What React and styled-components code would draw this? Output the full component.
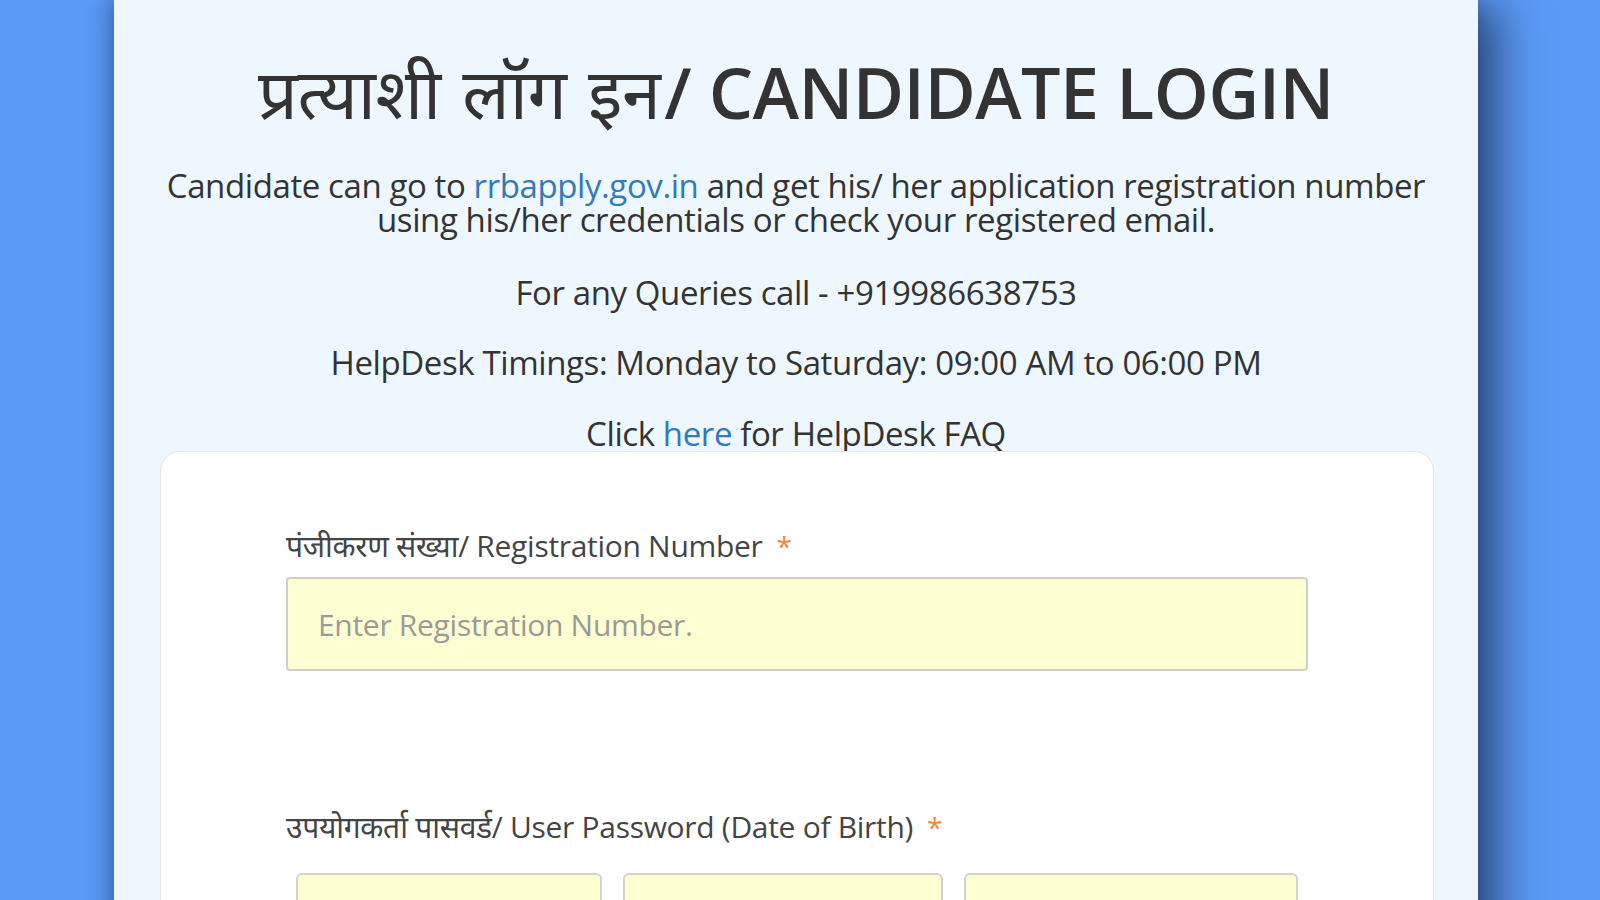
import styled, { createGlobalStyle } from "styled-components"

const GlobalStyle = createGlobalStyle`
    html, body {
        margin: 0;
        padding: 0;
        height: 100%;
        overflow: hidden;
    }
    body {
        background: #5b9af6;
        font-family: "Open Sans", "Noto Sans", sans-serif;
        color: #333;
    }
`

const Page = styled.div`
    height: 100vh;
    overflow: hidden;
    display: flex;
`

const Panel = styled.div`
    width: 1364px;
    margin-left: 114px;
    min-height: 1100px;
    background: #eef6fe;
    box-shadow: 28px 0 40px -6px rgba(20, 30, 60, 0.6), -6px 0 18px rgba(20, 30, 60, 0.35);
    padding-top: 53px;
    box-sizing: border-box;
    display: flex;
    flex-direction: column;
    align-items: center;
`

const Title = styled.h1`
    margin: 0;
    font-size: 70px;
    line-height: 78px;
    font-weight: 600;
    color: #333;
    letter-spacing: -0.5px;
`

const Hindi = styled.span`
    font-weight: 400;
    word-spacing: 4px;
    margin-right: 4px;
`

const Info = styled.p`
    margin: ${p => p.top}px 30px 0;
    font-size: 33px;
    line-height: 34px;
    text-align: center;
    color: #333;
    letter-spacing: -0.4px;
`

const Link = styled.a`
    color: #337ab7;
    text-decoration: none;
`

const Card = styled.div`
    align-self: stretch;
    margin: 0 44px 0 46px;
    background: #fff;
    border: 1px solid #e3e6ea;
    border-radius: 20px;
    padding: 77px 125px 0;
    flex: 1;
`

const Label = styled.label`
    display: block;
    font-size: 30px;
    line-height: 34px;
    color: #444;
    letter-spacing: -0.3px;
`

const Star = styled.span`
    color: #f0873a;
    margin-left: 14px;
    font-size: 28px;
`

const Input = styled.input`
    display: block;
    box-sizing: border-box;
    width: 100%;
    height: 94px;
    margin-top: 14px;
    padding: 0 30px;
    background: #fefed3;
    border: 2px solid #cfcfc8;
    border-radius: 4px;
    font-family: "Open Sans", sans-serif;
    font-size: 30px;
    color: #333;
    letter-spacing: -0.3px;
    outline: none;
    &::placeholder {
        color: #9a9a96;
    }
`

const Field = styled.div`
    margin-bottom: ${p => p.gap || 0}px;
`

const DateRow = styled.div`
    display: grid;
    grid-template-columns: 305fr 320fr 333fr;
    gap: 21px;
    padding: 0 10px;
    margin-top: 29px;
`

const Select = styled.div`
    height: 92px;
    background: #fefed3;
    border: 2px solid #d3d3cc;
    border-radius: 6px;
`

const App = () => {
    return (
        <Page>
            <GlobalStyle />
            <Panel>
                <Title>
                    <Hindi>प्रत्याशी लॉग इन</Hindi>/ CANDIDATE LOGIN
                </Title>
                <Info top={38}>
                    Candidate can go to <Link href="#">rrbapply.gov.in</Link> and get his/ her application registration number
                    <br />
                    using his/her credentials or check your registered email.
                </Info>
                <Info top={39}>For any Queries call - +919986638753</Info>
                <Info top={36}>HelpDesk Timings: Monday to Saturday: 09:00 AM to 06:00 PM</Info>
                <Info top={37}>
                    Click <Link href="#">here</Link> for HelpDesk FAQ
                </Info>
                <Card>
                    <Field gap={139}>
                        <Label>
                            पंजीकरण संख्या/ Registration Number<Star>*</Star>
                        </Label>
                        <Input placeholder="Enter Registration Number." />
                    </Field>
                    <Field>
                        <Label>
                            उपयोगकर्ता पासवर्ड/ User Password (Date of Birth)<Star>*</Star>
                        </Label>
                        <DateRow>
                            <Select />
                            <Select />
                            <Select />
                        </DateRow>
                    </Field>
                </Card>
            </Panel>
        </Page>
    )
}

export default App
